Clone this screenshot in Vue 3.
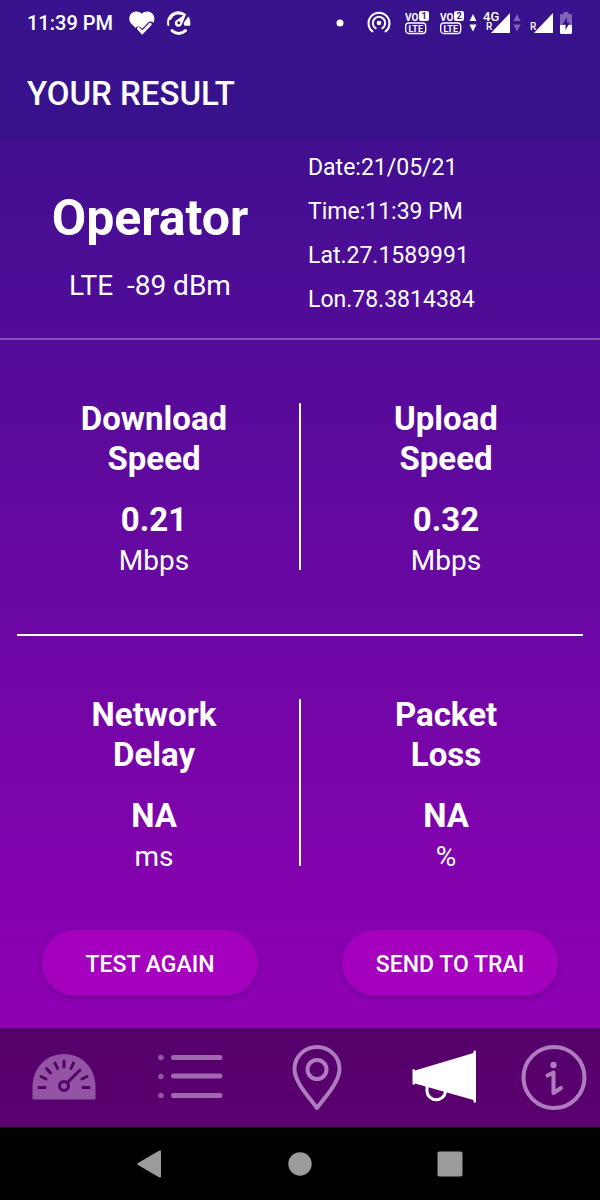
<template>
    <div class="screen">
        <div class="status-bar">
            <span class="clock">11:39 PM</span>
            <div class="notifications">
                <svg width="26" height="24" viewBox="0 0 26 24">
                    <path class="fill" d="M6.500 17 2.600 13C-.6 9.800-.4 4.800 2.600 2.200 5.800-.4 10-.2 12.700 2.800 15.400-.2 20-.4 23 2.200c2.600 2.200 3.200 6.300 1.400 9.600-1.700-1.600-3.900-1.600-5.400-.1l-6 6-1.200-1.200c-1.600-1.500-4-1.300-5.300.5z" />
                    <path class="tick" d="M9.500 17.500l3.700 4 8-8.200" />
                </svg>
                <svg width="26" height="26" viewBox="0 0 26 26">
                    <path class="stroke" d="M2.300 15C1 8 5.500 2.500 12 2.500c2.600 0 4.500.7 6.200 1.900" />
                    <path class="arc" d="M4 8.500C6.500 3.500 12 1.500 17 4" />
                    <path class="fill" d="M22.300 6.500c1.800 2.300 2.500 5.400 1.800 9.200h-5.600c-.6-1.200-.9-1.900-.7-3z" />
                    <path class="fill" d="M20.500 3.200 10.800 10a3.600 3.600 0 1 0 5 4.400z" />
                    <circle class="hole" cx="12.800" cy="12.700" r="1.500" />
                    <path class="arc" d="M6 20.700c4 3.600 9.500 3.600 13.500 0" />
                </svg>
            </div>
            <div class="system-icons">
                <svg width="8" height="8" viewBox="0 0 8 8"><circle class="fill" cx="4" cy="4" r="3.500" /></svg>
                <svg class="hotspot" width="24" height="24" viewBox="0 0 24 24">
                    <circle class="fill" cx="12" cy="12" r="2.300" />
                    <path class="stroke" d="M8.700 17.300a6.200 6.200 0 1 1 6.600 0M5.500 20.500a10.500 10.500 0 1 1 13 0" />
                </svg>
                <svg v-for="sim in [1, 2]" :key="sim" class="volte" width="24" height="24" viewBox="0 0 24 24">
                    <text class="small" x="0" y="10">VO</text>
                    <rect class="fill" x="14" y="0" width="10" height="10" rx="2" />
                    <text class="sim" x="19" y="8" text-anchor="middle">{{ sim }}</text>
                    <rect class="outline" x=".7" y="12" width="20" height="10.500" rx="3" stroke-width="1.300" />
                    <text class="lte" x="10.700" y="20.500" text-anchor="middle">LTE</text>
                </svg>
                <svg class="arrows" width="8" height="20" viewBox="0 0 8 20">
                    <path class="fill" d="M4 1l3.500 7h-7zM4 18.500l3.500-7h-7z" />
                </svg>
                <svg class="signal" width="28" height="34" viewBox="0 -4 28 34">
                    <path class="fill" d="M27 3v20H8z" />
                    <text class="roam" x="3" y="20">R</text>
                    <text class="network" x="0" y="11">4G</text>
                </svg>
                <svg class="arrows dim" width="8" height="20" viewBox="0 0 8 20">
                    <path class="fill" d="M4 1l3.500 7h-7zM4 18.500l3.500-7h-7z" />
                </svg>
                <svg class="signal second" width="24" height="26" viewBox="0 0 24 26">
                    <path class="fill" d="M23 3v20H4z" />
                    <text class="roam" x="0" y="20">R</text>
                </svg>
                <svg class="battery" width="12" height="22" viewBox="0 0 12 22">
                    <path class="fill empty" d="M3.500 0h5v2H11q1 0 1 1v10H0V3q0-1 1-1h2.500z" />
                    <path class="fill" d="M0 13h12v7.500q0 1.500-1.500 1.500h-9Q0 22 0 20.500z" />
                    <path class="bolt" d="M7 5 2.500 12.500H5.500V18L10 10.500H7z" />
                </svg>
            </div>
        </div>

        <header class="app-bar">
            <h1>YOUR RESULT</h1>
        </header>

        <main class="content">
            <section class="summary">
                <div class="operator">
                    <h2>Operator</h2>
                    <p>LTE&nbsp; -89 dBm</p>
                </div>
                <div class="details">
                    <p v-for="line in details" :key="line">{{ line }}</p>
                </div>
            </section>

            <section v-for="(row, i) in rows" :key="i" class="metrics">
                <div v-for="metric in row" :key="metric.second" class="metric">
                    <h3>{{ metric.first }}<br />{{ metric.second }}</h3>
                    <strong>{{ metric.value }}</strong>
                    <span>{{ metric.unit }}</span>
                </div>
            </section>

            <div class="actions">
                <div><button type="button">TEST AGAIN</button></div>
                <div><button type="button">SEND TO TRAI</button></div>
            </div>
        </main>

        <nav class="tabs">
            <a href="#test" aria-label="Speed test">
                <svg width="66" height="66" viewBox="0 0 66 66">
                    <path class="fill" d="M1.500 53.500V42C1.500 23 15 9 33 9s31.500 14 31.500 33v11.500q0 1-1 1h-61q-1 0-1-1z" />
                    <path class="mark" d="M8 42.500h6M52 42.500h6M10 31.500l5 2.500M51 34l5-2.500M15.500 23.500l4 4.500M24 18l2.500 5.500M33 16v6M42.500 18l-2.500 5.500M36.500 37.500 49 25" />
                    <circle class="mark" cx="33" cy="41" r="4.500" />
                </svg>
            </a>
            <a href="#history" aria-label="History">
                <svg width="66" height="66" viewBox="0 0 66 66">
                    <path class="bars" d="M15.500 12.500h46.500M15.500 31h46.500M15.500 50.500h46.500" />
                    <circle class="fill" cx="2.900" cy="12.500" r="2.800" />
                    <circle class="fill" cx="2.900" cy="31.500" r="2.800" />
                    <circle class="fill" cx="2.900" cy="50.500" r="2.800" />
                </svg>
            </a>
            <a href="#map" aria-label="Map">
                <svg width="66" height="66" viewBox="0 0 66 66">
                    <path class="line" d="M32 63C26 54 9.500 38 9.500 24A22.500 22 0 0 1 54.500 24C54.500 38 38 54 32 63z" />
                    <circle class="line" cx="32" cy="24.500" r="9.500" />
                </svg>
            </a>
            <a href="#result" class="active" aria-label="Result">
                <svg width="66" height="66" viewBox="0 0 66 66">
                    <path class="fill" d="M.5 25q0-1 1-1t1.500 1.500L61.500 8V6.500q0-1 1.200-1T64 6.500v50q0 1.200-1.200 1.200t-1.300-1.200V55L3 38.500q0 1.200-1.300 1.200T.5 38.500z" />
                    <path class="handle" d="M15 41v5.500a9.300 9.300 0 0 0 18.500 0" />
                </svg>
            </a>
            <a href="#info" aria-label="Information">
                <svg width="66" height="66" viewBox="0 0 66 66">
                    <circle class="line" cx="33" cy="32.500" r="30.500" />
                    <circle class="dot" cx="32.500" cy="20" r="3.200" />
                    <path class="line" d="M26.500 30.500l6-3v20.500l7.500-5" />
                </svg>
            </a>
        </nav>

        <div class="system-nav">
            <button type="button" aria-label="Back">
                <svg width="26" height="28" viewBox="0 0 26 28"><path d="M1 13 22 .8q2-1 2 1v24.400q0 2-2 1L1 15q-1.500-1 0-2z" /></svg>
            </button>
            <button type="button" aria-label="Home">
                <svg width="24" height="24" viewBox="0 0 24 24"><circle cx="12" cy="12" r="11.700" /></svg>
            </button>
            <button type="button" aria-label="Recent apps">
                <svg width="26" height="26" viewBox="0 0 26 26"><rect x=".5" y=".5" width="25" height="25" rx="2" /></svg>
            </button>
        </div>
    </div>
</template>

<script setup>
import { ref } from 'vue'

const details = ref([
    'Date:21/05/21',
    'Time:11:39 PM',
    'Lat.27.1589991',
    'Lon.78.3814384'
])

const rows = ref([
    [
        { first: 'Download', second: 'Speed', value: '0.21', unit: 'Mbps' },
        { first: 'Upload', second: 'Speed', value: '0.32', unit: 'Mbps' }
    ],
    [
        { first: 'Network', second: 'Delay', value: 'NA', unit: 'ms' },
        { first: 'Packet', second: 'Loss', value: 'NA', unit: '%' }
    ]
])
</script>

<style>
body {
    margin: 0;
    background: #000;
}
</style>

<style scoped>
.screen {
    display: flex;
    flex-direction: column;
    min-height: 100vh;
    font-family: Roboto, sans-serif;
    color: #fff;
}

h1,
h2,
h3,
p {
    margin: 0;
}

svg {
    display: block;
    flex: none;
}

.fill {
    fill: currentColor;
}

/* Barra de estado */
.status-bar {
    display: flex;
    align-items: center;
    height: 46px;
    padding: 0 28px 0 27px;
    background: #38128c;
}

.clock {
    font-size: 20px;
    font-weight: 500;
    white-space: nowrap;
}

.notifications {
    display: flex;
    align-items: center;
    gap: 11px;
    margin-left: 16px;
}

.system-icons {
    display: flex;
    align-items: center;
    margin-left: auto;
}

.stroke {
    fill: none;
    stroke: currentColor;
    stroke-width: 2;
    stroke-linecap: round;
}

.arc,
.tick {
    fill: none;
    stroke: currentColor;
    stroke-width: 3;
    stroke-linecap: round;
}

.hole,
.bolt {
    fill: #38128c;
}

.hotspot {
    margin-left: 23px;
}

.volte {
    margin-left: 14px;
}

.volte + .volte {
    margin-left: 11px;
}

.small {
    fill: currentColor;
    font-size: 10px;
    font-weight: 700;
}

.sim {
    fill: #38128c;
    font-size: 9px;
    font-weight: 700;
}

.lte {
    fill: currentColor;
    font-size: 9px;
    font-weight: 700;
}

.outline {
    fill: none;
    stroke: currentColor;
}

.arrows {
    margin-left: 5px;
}

.dim,
.empty {
    opacity: 0.35;
}

.signal {
    margin-left: 6px;
}

.arrows.dim {
    margin-left: 2px;
}

.signal.second {
    margin-left: 9px;
}

.network {
    fill: currentColor;
    font-size: 13px;
    font-weight: 500;
}

.roam {
    fill: currentColor;
    font-size: 10px;
    font-weight: 500;
}

.battery {
    margin-left: 6px;
}

.app-bar {
    display: flex;
    align-items: center;
    height: 94px;
    padding: 2px 27px 0;
    box-sizing: border-box;
    background: #38128c;
}

.app-bar h1 {
    font-size: 33px;
    line-height: 40px;
    font-weight: 500;
}

.content {
    flex: 1;
    background: linear-gradient(#410f90, #9000b4);
}

.summary {
    display: flex;
    border-bottom: 2px solid #8654b8;
}

.operator {
    width: 50%;
    padding-top: 48px;
    box-sizing: border-box;
    text-align: center;
}

.operator h2 {
    font-size: 50px;
    line-height: 60px;
    font-weight: 700;
}

.operator p {
    margin-top: 18px;
    font-size: 28px;
    line-height: 40px;
}

.details {
    width: 50%;
    padding: 6px 0 16px 8px;
    box-sizing: border-box;
    font-size: 23px;
    line-height: 44px;
}

/* Resultados */
.metrics {
    display: flex;
    padding: 59px 8px 53px;
    position: relative;
    text-align: center;
}

.metrics + .metrics::before {
    content: '';
    position: absolute;
    top: 0;
    left: 17px;
    right: 17px;
    height: 2px;
    background: #fff;
}

.metrics + .metrics {
    padding-top: 61px;
}

.metric {
    display: flex;
    flex-direction: column;
    flex: 1;
    line-height: 40px;
}

.metric:first-child::after {
    content: '';
    position: absolute;
    left: 50%;
    bottom: 64px;
    width: 2px;
    height: 167px;
    margin-left: -1px;
    background: #fff;
}

.metric h3,
.metric strong {
    font-size: 33px;
    font-weight: 700;
}

.metric strong {
    margin: 21px 0 1px;
}

.metric span {
    font-size: 28px;
}

.actions {
    display: flex;
    padding-bottom: 32px;
}

.actions div {
    display: flex;
    flex: 1;
    justify-content: center;
}

.actions button {
    width: 72%;
    height: 66px;
    padding: 2px 0 0;
    border: none;
    border-radius: 33px;
    background: #a400be;
    box-shadow: 0 2px 4px rgba(40, 0, 70, 0.35);
    color: #fff;
    font-family: inherit;
    font-size: 23px;
    font-weight: 500;
    cursor: pointer;
}

.tabs {
    display: grid;
    grid-template-columns: 127fr 127fr 127fr 127fr 92fr;
    align-items: center;
    justify-items: center;
    height: 99px;
    background: linear-gradient(#54006a, #5c0070);
}

.tabs a {
    color: #9354a3;
}

.tabs a.active {
    color: #fff;
}

.line,
.bars,
.handle {
    fill: none;
    stroke: #b07cc0;
    stroke-width: 4;
    stroke-linecap: round;
    stroke-linejoin: round;
}

.dot {
    fill: #b07cc0;
}

.bars {
    stroke: #a267b1;
    stroke-width: 5;
}

.handle {
    stroke: currentColor;
    stroke-width: 3;
}

.mark {
    fill: none;
    stroke: #550069;
    stroke-width: 3;
    stroke-linecap: round;
}

.system-nav {
    display: flex;
    align-items: center;
    height: 73px;
    padding: 0 75px;
    background: #000;
}

.system-nav button {
    display: flex;
    flex: 1;
    justify-content: center;
    padding: 0;
    border: none;
    background: none;
    color: #9b9b9b;
    cursor: pointer;
}

.system-nav svg {
    fill: currentColor;
}
</style>
